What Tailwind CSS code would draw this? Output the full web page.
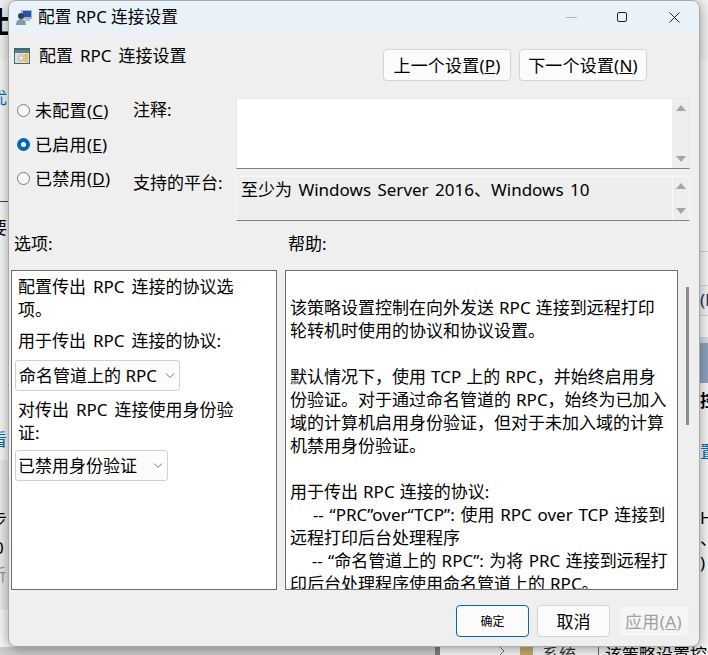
<!DOCTYPE html>
<html lang="zh-CN">
<head>
  <meta charset="UTF-8">
  <title>配置 RPC 连接设置</title>
  <script src="https://cdn.jsdelivr.net/npm/@tailwindcss/browser@4"></script>
</head>
<body class="w-[708px] h-[655px] overflow-hidden relative bg-[#fafafa] text-black text-[17px] leading-[23px] font-['Noto_Sans','Noto_Sans_CJK_SC',sans-serif]">

<!-- desktop behind the dialog -->
<div class="absolute left-0 top-0 w-full h-[60px] bg-[#f3f3f3]"></div>
<div class="absolute left-0 top-[201px] w-[8px] h-px bg-[#444]"></div>
<div class="absolute left-0 top-[460px] w-[8px] h-[150px] bg-[#ececec]"></div>
<div class="absolute left-[-14px] top-[5px] text-[30px] leading-[34px] font-bold">上</div>
<div class="absolute left-[-10px] top-[86px] text-[#0067c0]">优</div>
<div class="absolute left-[-10px] top-[216px]">要</div>
<div class="absolute left-[-10px] top-[428px] text-[#0067c0]">看</div>
<div class="absolute left-[-10px] top-[508px]">步</div>
<div class="absolute left-[-6px] top-[536px]">0</div>
<div class="absolute left-[-11px] top-[563px] text-[#999]">新</div>

<div class="absolute left-[700px] top-[251px] w-[8px] h-[34px] border-t border-[#d5d5d5]"></div>
<div class="absolute left-[700px] top-[285px] w-[8px] h-[31px] border-y border-[#d5d5d5] bg-[#f5f5f5]"></div>
<div class="absolute left-[700px] top-[288px] text-[#0f3a66]">(H</div>
<div class="absolute left-[700px] top-[337px] w-[8px] h-[6px] bg-[#d8dde3]"></div>
<div class="absolute left-[700px] top-[343px] w-[8px] h-[40px] bg-[#8fa5c0]"></div>
<div class="absolute left-[700px] top-[389px] font-bold">控</div>
<div class="absolute left-[700px] top-[440px] text-[#0067c0]">置</div>
<div class="absolute left-[700px] top-[506px]">Ho</div>
<div class="absolute left-[700px] top-[532px] leading-[14px]">、</div>
<div class="absolute left-[700px] top-[556px] leading-[14px]">)</div>

<div class="absolute left-0 top-[647px] w-[435px] h-[8px] bg-[#cfcfcf]"></div>
<div class="absolute left-[435px] top-[640px] w-[5px] h-[15px] bg-[#808080]"></div>
<svg class="absolute left-[498px] top-[647px]" width="8" height="8" viewBox="0 0 8 8" fill="none" stroke="#777" stroke-width="1"><path d="M2 0l4 4-4 4"/></svg>
<div class="absolute left-[520px] top-[647px] w-[13px] h-[8px] bg-[#c9ad6c]"></div>
<div class="absolute left-[542px] top-[643px] text-[#333]">系统</div>
<div class="absolute left-[598px] top-[647px] w-px h-[8px] bg-[#666]"></div>
<div class="absolute left-[605px] top-[643px] whitespace-nowrap">该策略设置控制</div>

<!-- dialog -->
<div class="absolute left-[8px] top-0 w-[692px] h-[647px] flex flex-col rounded-lg overflow-hidden border border-[#a8a8a8] bg-[#efefef] shadow-[0_2px_14px_rgba(0,0,0,0.4)]">

  <!-- title bar -->
  <div class="h-[33px] shrink-0 flex items-center bg-[#e9f2f9]">
    <svg class="ml-[7px] mr-[6px] -mt-[1px]" width="16" height="16" viewBox="0 0 16 16">
      <rect x="5" y="1" width="11" height="9" fill="#aab4c0"/>
      <rect x="7" y="2" width="8" height="6" fill="#1d56b8"/>
      <rect x="9" y="10" width="5" height="2" fill="#b8c0c8"/>
      <circle cx="5" cy="7" r="3" fill="#2f3f52"/>
      <path d="M0 16c0-4 2-6 5-6s5 2 5 6z" fill="#8499ae"/>
    </svg>
    <span class="whitespace-nowrap text-[16.7px] -mt-[2px]">配置 RPC 连接设置</span>
    <div class="ml-auto mr-[19px] relative w-[130px] h-full">
      <div class="absolute left-[16px] top-[16px] w-[11px] h-px bg-[#b5b5b5]"></div>
      <div class="absolute left-[67px] top-[11px] w-[10px] h-[10px] rounded-[2px] border border-[#222]"></div>
      <svg class="absolute left-[119px] top-[11px]" width="11" height="11" viewBox="0 0 11 11" fill="none" stroke="#222" stroke-width="1"><path d="M.5.5l10 10M10.5.5l-10 10"/></svg>
    </div>
  </div>

  <!-- policy name + prev/next -->
  <div class="flex items-start h-[32px] mt-[15px] pl-[5px] pr-[52px]">
    <svg class="mr-[9px] -mt-[1px]" width="16" height="16" viewBox="0 0 16 16">
      <rect width="16" height="16" fill="#3d6a72"/>
      <rect x="1" y="2" width="14" height="3" fill="#5a7f8a"/>
      <rect x="1" y="5" width="14" height="10" fill="#e6e0cc"/>
      <rect x="10" y="6" width="4" height="8" fill="#f0c040"/>
      <circle cx="7" cy="10" r="4" fill="#c8ccd0"/>
      <circle cx="7" cy="10" r="1.2" fill="#fff"/>
    </svg>
    <span class="whitespace-nowrap -mt-[5px] [word-spacing:2.5px]">配置 RPC 连接设置</span>
    <button class="ml-auto w-[128px] h-[32px] rounded-[4px] border border-[#d4d4d4] bg-[#fbfbfb] whitespace-nowrap tracking-[0.2px]">上一个设置(<u>P</u>)</button>
    <button class="ml-[8px] w-[128px] h-[32px] rounded-[4px] border border-[#d4d4d4] bg-[#fbfbfb] whitespace-nowrap tracking-[0.2px]">下一个设置(<u>N</u>)</button>
  </div>

  <!-- state, comment, platform -->
  <div class="flex mt-[17px] h-[123px]">
    <div class="w-[125px] pl-[8px] -mt-[5px] flex flex-col">
      <label class="flex items-center h-[34px] gap-[5px]">
        <span class="w-[13px] h-[13px] rounded-full border border-[#7a7a7a] bg-[#f7f7f7]"></span>
        <span class="tracking-[0.3px]">未配置(<u>C</u>)</span>
      </label>
      <label class="flex items-center h-[34px] gap-[5px]">
        <span class="w-[13px] h-[13px] rounded-full border-[4px] border-[#0067c0] bg-white"></span>
        <span class="tracking-[0.3px]">已启用(<u>E</u>)</span>
      </label>
      <label class="flex items-center h-[34px] gap-[5px]">
        <span class="w-[13px] h-[13px] rounded-full border border-[#7a7a7a] bg-[#f7f7f7]"></span>
        <span class="tracking-[0.3px]">已禁用(<u>D</u>)</span>
      </label>
    </div>
    <div class="w-[103px] flex flex-col -ml-px">
      <div class="h-[79px]">注释:</div>
      <div class="-mt-[6px]">支持的平台:</div>
    </div>
    <div class="w-[454px] flex flex-col">
      <div class="h-[71px] flex bg-white border border-[#e6e6e6] border-b-[#808080]">
        <div class="flex-1"></div>
        <div class="w-[17px] bg-[#eeeeee] flex flex-col items-center justify-between py-[6px]">
          <span class="w-0 h-0 border-x-[5px] border-x-transparent border-b-[6px] border-b-[#a6a6a6]"></span>
          <span class="w-0 h-0 border-x-[5px] border-x-transparent border-t-[6px] border-t-[#a6a6a6]"></span>
        </div>
      </div>
      <div class="mt-[7px] h-[45px] flex bg-[#eeeeee] border border-[#f8f8f8] border-b-[#808080]">
        <div class="flex-1 pl-[4px] pt-[1px] whitespace-nowrap [word-spacing:2px]">至少为 Windows Server 2016、Windows 10</div>
        <div class="w-[17px] border-l border-[#fafafa] flex flex-col items-center justify-between py-[6px]">
          <span class="w-0 h-0 border-x-[5px] border-x-transparent border-b-[6px] border-b-[#a6a6a6]"></span>
          <span class="w-0 h-0 border-x-[5px] border-x-transparent border-t-[6px] border-t-[#a6a6a6]"></span>
        </div>
      </div>
    </div>
  </div>

  <!-- section labels -->
  <div class="flex mt-[11px] h-[24px] pl-[5px]">
    <div class="w-[274px]">选项:</div>
    <div>帮助:</div>
  </div>

  <!-- panels -->
  <div class="flex mt-[14px] h-[320px] pl-[2px] relative">
    <div class="w-[266px] h-full border border-[#6e6e6e] bg-white pl-[3px] pt-[4px]">
      <p class="pl-[3px] [word-spacing:2.5px]">配置传出 RPC 连接的协议选<br>项。</p>
      <p class="pl-[3px] mt-[8px] [word-spacing:2.5px]">用于传出 RPC 连接的协议:</p>
      <div class="mt-[8px] w-[165px] h-[31px] flex items-center justify-between pl-[3px] pr-[4px] rounded-[3px] border border-[#d0d0d0] bg-[#fcfcfc] whitespace-nowrap">
        命名管道上的 RPC
        <svg width="10" height="6" viewBox="0 0 10 6" fill="none" stroke="#777" stroke-width="1"><path d="M1 .5l4 4 4-4"/></svg>
      </div>
      <p class="pl-[3px] mt-[7px] [word-spacing:2.5px]">对传出 RPC 连接使用身份验<br>证:</p>
      <div class="mt-[6px] w-[153px] h-[31px] flex items-center justify-between pl-[2px] pr-[4px] rounded-[3px] border border-[#d0d0d0] bg-[#fcfcfc] whitespace-nowrap">
        已禁用身份验证
        <svg width="10" height="6" viewBox="0 0 10 6" fill="none" stroke="#777" stroke-width="1"><path d="M1 .5l4 4 4-4"/></svg>
      </div>
    </div>
    <div class="ml-[8px] w-[393px] h-full border border-[#6e6e6e] bg-white overflow-hidden pl-[4px] pt-[25px] whitespace-nowrap [word-spacing:0.6px]">
      该策略设置控制在向外发送 RPC 连接到远程打印<br>
      轮转机时使用的协议和协议设置。<br>
      <br>
      默认情况下，使用 TCP 上的 RPC，并始终启用身<br>
      份验证。对于通过命名管道的 RPC，始终为已加入<br>
      域的计算机启用身份验证，但对于未加入域的计算<br>
      机禁用身份验证。<br>
      <br>
      用于传出 RPC 连接的协议:<br>
      <span class="[word-spacing:1.3px]">&nbsp;&nbsp;&nbsp;&nbsp;-- “PRC”over“TCP”: 使用 RPC over TCP 连接到</span><br>
      远程打印后台处理程序<br>
      <span class="[word-spacing:1px]">&nbsp;&nbsp;&nbsp;&nbsp;-- “命名管道上的 RPC”: 为将 PRC 连接到远程打</span><br>
      印后台处理程序使用命名管道上的 RPC。
    </div>
    <!-- scrollbar thumb next to help -->
    <div class="absolute left-[677px] top-[17px] w-[3px] h-[138px] bg-[#8c8c8c]"></div>
  </div>

  <!-- dialog buttons -->
  <div class="flex justify-end mt-[15px] pr-[10px] gap-[8px]">
    <button class="w-[73px] h-[32px] rounded-[4px] border border-[#0067c0] bg-[#fbfbfb] text-[12px]">确定</button>
    <button class="w-[73px] h-[32px] rounded-[4px] border border-[#d4d4d4] bg-[#fbfbfb]">取消</button>
    <button class="w-[71px] h-[32px] rounded-[4px] border border-[#ebebeb] bg-[#f5f5f5] text-[#a0a0a0] whitespace-nowrap tracking-[0.4px]">应用(<u>A</u>)</button>
  </div>
</div>

</body>
</html>
